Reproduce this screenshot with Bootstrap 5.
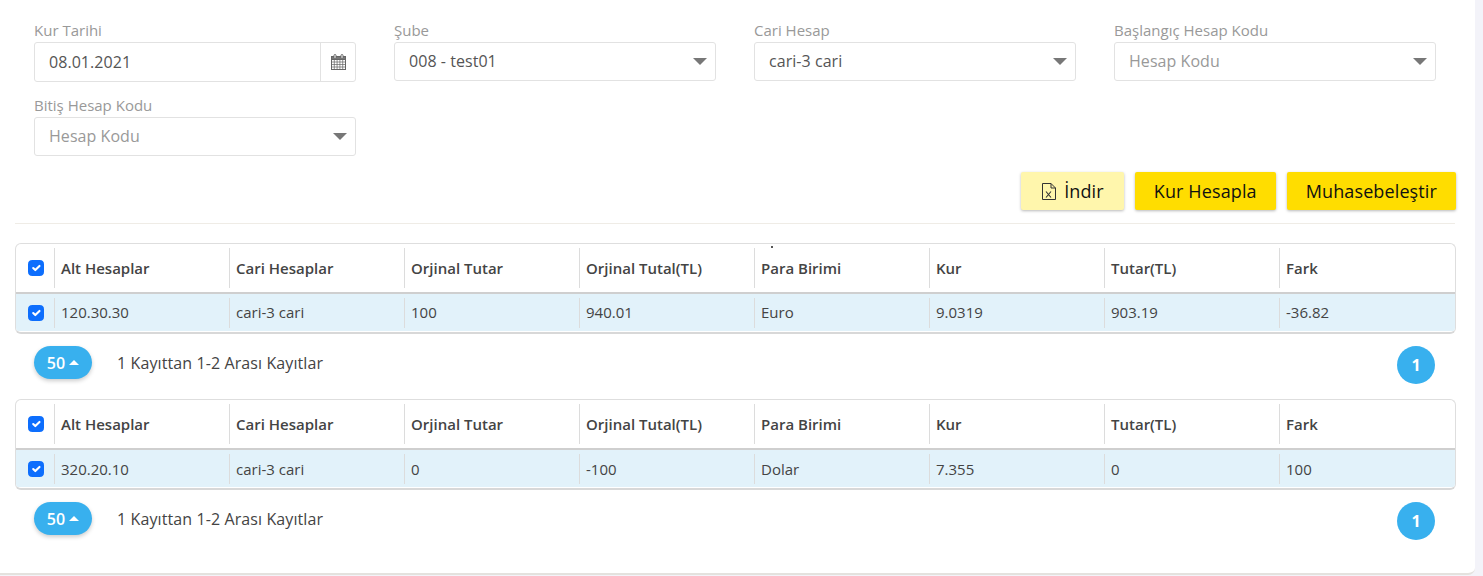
<!DOCTYPE html>
<html lang="tr">
<head>
  <meta charset="UTF-8" />
  <meta name="viewport" content="width=device-width, initial-scale=1" />
  <title>Kur Farkı</title>
  <link href="https://cdn.jsdelivr.net/npm/bootstrap@5.3.3/dist/css/bootstrap.min.css" rel="stylesheet">
  <style>
    body {
      background-color: #f3f3f9;
      font-family: "Open Sans", sans-serif;
      color: #495057;
      height: 576px;
      overflow: hidden;
    }

    .sayfa-kart {
      width: 1475px;
      height: 575px;
      background-color: #fff;
      border-radius: 0 0 7px 0;
      border-bottom: 2px solid #e4e2de;
      padding: 21px 19px 0 15px;
    }

    .filtre-satir {
      width: 1440px;
      display: grid;
      grid-template-columns: repeat(4, 360px);
    }

    .filtre-alan {
      padding: 0 19px;
      height: 75px;
    }

    .filtre-alan label {
      display: block;
      font-size: 15px;
      line-height: 19px;
      height: 21px;
      color: #999;
    }

    .secim-kutu {
      height: 39px;
      border: 1px solid #e2e2e2;
      border-radius: 3px;
      padding-left: 14px;
      padding-right: 8px;
      padding-bottom: 1px;
      font-size: 16px;
      letter-spacing: .05px;
      color: #555;
      background-color: #fff;
    }

    .secim-kutu.bos { color: #999; }

    .ok-asagi {
      width: 0;
      height: 0;
      border-left: 7.5px solid transparent;
      border-right: 7.5px solid transparent;
      border-top: 7px solid #777;
    }

    .tarih-kutu {
      height: 40px;
      padding-right: 0;
      padding-bottom: 0;
    }

    .tarih-ikon {
      width: 35px;
      height: 100%;
      border-left: 1px solid #e2e2e2;
    }

    .islem-satir {
      margin-top: 1px;
      height: 38px;
      gap: 11px;
      width: 1441px;
    }

    .islem-btn {
      height: 38px;
      border: 0;
      border-radius: 2px;
      font-size: 18px;
      letter-spacing: .12px;
      font-weight: 500;
      color: #111;
      padding: 0 19px;
      box-shadow: 0 1px 3px rgba(0, 0, 0, .28);
    }

    .islem-sari { background-color: #ffdd00; }
    .islem-acik { background-color: #fff6ac; gap: 7px; padding: 0 20px; }

    .ayrac {
      width: 1440px;
      height: 1px;
      background-color: #efece6;
      margin-top: 13px;
      margin-bottom: 19px;
    }

    .veri-kutu {
      width: 1441px;
      height: 91px;
      border: 1px solid #dedede;
      border-bottom: 2px solid #d8d8d8;
      border-radius: 6px;
      overflow: hidden;
    }

    .veri-tablo {
      table-layout: fixed;
      width: 1439px;
      margin: 0;
      font-size: 15px;
      color: #444;
    }

    .veri-tablo th,
    .veri-tablo td {
      padding: 0;
      border: 0;
      font-weight: 400;
      vertical-align: middle;
      background-color: transparent;
      box-shadow: none;
    }

    .veri-tablo thead tr {
      height: 49px;
      border-bottom: 2px solid #cfcfcf;
    }

    .veri-tablo thead th {
      font-weight: 600;
      color: #444;
    }

    .veri-tablo tbody tr {
      height: 38px;
      background-color: #e2f2fa;
    }

    .hucre {
      display: flex;
      align-items: center;
      position: relative;
      border-left: 1px solid #dcdcdc;
      padding-left: 6px;
    }

    thead .hucre { height: 40px; }
    tbody .hucre { height: 30px; }

    .sutun-sec { width: 38px; }
    .sutun-veri { width: 175px; }

    .sec-hucre {
      display: flex;
      align-items: center;
      justify-content: center;
      padding-left: 2px;
    }

    .sec-hucre .form-check-input {
      margin: 0;
      width: 16px;
      height: 16px;
    }

    .iz-nokta {
      position: absolute;
      left: 16px;
      top: -2px;
      width: 2px;
      height: 2px;
      background-color: #555;
    }

    .sayfa-alt {
      width: 1441px;
      height: 65.4px;
      padding: 12px 21px 0 19px;
    }

    .adet-btn {
      width: 58px;
      height: 33px;
      border: 0;
      border-radius: 17px;
      background-color: #38b0ee;
      color: #fff;
      font-size: 16px;
      font-weight: 600;
      gap: 4px;
      box-shadow: 0 2px 4px rgba(0, 0, 0, .2);
    }

    .ok-yukari {
      width: 0;
      height: 0;
      border-left: 5px solid transparent;
      border-right: 5px solid transparent;
      border-bottom: 5px solid #fff;
    }

    .kayit-yazi {
      font-size: 16px;
      letter-spacing: .1px;
      line-height: 20px;
      margin-left: 25px;
      margin-top: 7px;
      color: #444;
    }

    .sayfa-no {
      width: 38px;
      height: 38px;
      border-radius: 50%;
      background-color: #38b0ee;
      color: #fff;
      font-size: 16px;
      font-weight: 700;
    }
  </style>
</head>
<body>
  <div class="sayfa-kart">
    <div class="filtre-satir">
      <div class="filtre-alan">
        <label>Kur Tarihi</label>
        <div class="secim-kutu tarih-kutu d-flex align-items-center justify-content-between">
          <span>08.01.2021</span>
          <span class="tarih-ikon d-flex align-items-center justify-content-center">
            <svg width="15" height="16" viewBox="0 0 15 16" fill="none" stroke="#666" stroke-width="1">
              <rect x=".5" y="2.5" width="14" height="13" fill="#fff"/>
              <path d="M.5 2.5h14v3H.5z" fill="#777"/>
              <path d="M.5 8h14M.5 10.5h14M.5 13h14M3.3 5.5v10M6.1 5.5v10M8.9 5.5v10M11.7 5.5v10" stroke-width=".7"/>
              <rect x="3" y=".5" width="2" height="4" rx="1" fill="#fff"/>
              <rect x="10" y=".5" width="2" height="4" rx="1" fill="#fff"/>
            </svg>
          </span>
        </div>
      </div>
      <div class="filtre-alan">
        <label>Şube</label>
        <div class="secim-kutu d-flex align-items-center justify-content-between"><span>008 - test01</span><span class="ok-asagi"></span></div>
      </div>
      <div class="filtre-alan">
        <label>Cari Hesap</label>
        <div class="secim-kutu d-flex align-items-center justify-content-between"><span>cari-3 cari</span><span class="ok-asagi"></span></div>
      </div>
      <div class="filtre-alan">
        <label>Başlangıç Hesap Kodu</label>
        <div class="secim-kutu bos d-flex align-items-center justify-content-between"><span>Hesap Kodu</span><span class="ok-asagi"></span></div>
      </div>
      <div class="filtre-alan">
        <label>Bitiş Hesap Kodu</label>
        <div class="secim-kutu bos d-flex align-items-center justify-content-between"><span>Hesap Kodu</span><span class="ok-asagi"></span></div>
      </div>
    </div>

    <div class="islem-satir d-flex justify-content-end">
      <button class="islem-btn islem-acik d-flex align-items-center">
        <svg width="16" height="19" viewBox="0 0 16 19" fill="none" stroke="#333" stroke-width="1">
          <path d="M1.5 1.5h8.5l4.5 4.5v11.5h-13z"/>
          <path d="M10 1.5v4.5h4.5"/>
          <path d="M5 9.5l5 6M10 9.5l-5 6" stroke-width="1.1"/>
        </svg>
        <span>İndir</span>
      </button>
      <button class="islem-btn islem-sari">Kur Hesapla</button>
      <button class="islem-btn islem-sari">Muhasebeleştir</button>
    </div>

    <div class="ayrac"></div>

    <div class="veri-kutu">
      <table class="table veri-tablo">
        <colgroup>
          <col class="sutun-sec"><col class="sutun-veri"><col class="sutun-veri"><col class="sutun-veri"><col class="sutun-veri"><col class="sutun-veri"><col class="sutun-veri"><col class="sutun-veri"><col>
        </colgroup>
        <thead>
          <tr>
            <th><div class="sec-hucre"><input class="form-check-input" type="checkbox" checked></div></th>
            <th><div class="hucre">Alt Hesaplar</div></th>
            <th><div class="hucre">Cari Hesaplar</div></th>
            <th><div class="hucre">Orjinal Tutar</div></th>
            <th><div class="hucre">Orjinal Tutal(TL)</div></th>
            <th><div class="hucre"><span class="iz-nokta"></span>Para Birimi</div></th>
            <th><div class="hucre">Kur</div></th>
            <th><div class="hucre">Tutar(TL)</div></th>
            <th><div class="hucre">Fark</div></th>
          </tr>
        </thead>
        <tbody>
          <tr>
            <td><div class="sec-hucre"><input class="form-check-input" type="checkbox" checked></div></td>
            <td><div class="hucre">120.30.30</div></td>
            <td><div class="hucre">cari-3 cari</div></td>
            <td><div class="hucre">100</div></td>
            <td><div class="hucre">940.01</div></td>
            <td><div class="hucre">Euro</div></td>
            <td><div class="hucre">9.0319</div></td>
            <td><div class="hucre">903.19</div></td>
            <td><div class="hucre">-36.82</div></td>
          </tr>
        </tbody>
      </table>
    </div>
    <div class="sayfa-alt d-flex align-items-start">
      <button class="adet-btn d-flex align-items-center justify-content-center"><span>50</span><span class="ok-yukari"></span></button>
      <span class="kayit-yazi">1 Kayıttan 1-2 Arası Kayıtlar</span>
      <span class="sayfa-no ms-auto d-flex align-items-center justify-content-center">1</span>
    </div>

    <div class="veri-kutu">
      <table class="table veri-tablo">
        <colgroup>
          <col class="sutun-sec"><col class="sutun-veri"><col class="sutun-veri"><col class="sutun-veri"><col class="sutun-veri"><col class="sutun-veri"><col class="sutun-veri"><col class="sutun-veri"><col>
        </colgroup>
        <thead>
          <tr>
            <th><div class="sec-hucre"><input class="form-check-input" type="checkbox" checked></div></th>
            <th><div class="hucre">Alt Hesaplar</div></th>
            <th><div class="hucre">Cari Hesaplar</div></th>
            <th><div class="hucre">Orjinal Tutar</div></th>
            <th><div class="hucre">Orjinal Tutal(TL)</div></th>
            <th><div class="hucre">Para Birimi</div></th>
            <th><div class="hucre">Kur</div></th>
            <th><div class="hucre">Tutar(TL)</div></th>
            <th><div class="hucre">Fark</div></th>
          </tr>
        </thead>
        <tbody>
          <tr>
            <td><div class="sec-hucre"><input class="form-check-input" type="checkbox" checked></div></td>
            <td><div class="hucre">320.20.10</div></td>
            <td><div class="hucre">cari-3 cari</div></td>
            <td><div class="hucre">0</div></td>
            <td><div class="hucre">-100</div></td>
            <td><div class="hucre">Dolar</div></td>
            <td><div class="hucre">7.355</div></td>
            <td><div class="hucre">0</div></td>
            <td><div class="hucre">100</div></td>
          </tr>
        </tbody>
      </table>
    </div>
    <div class="sayfa-alt d-flex align-items-start">
      <button class="adet-btn d-flex align-items-center justify-content-center"><span>50</span><span class="ok-yukari"></span></button>
      <span class="kayit-yazi">1 Kayıttan 1-2 Arası Kayıtlar</span>
      <span class="sayfa-no ms-auto d-flex align-items-center justify-content-center">1</span>
    </div>
  </div>

  <script src="https://cdn.jsdelivr.net/npm/bootstrap@5.3.3/dist/js/bootstrap.bundle.min.js"></script>
</body>
</html>
